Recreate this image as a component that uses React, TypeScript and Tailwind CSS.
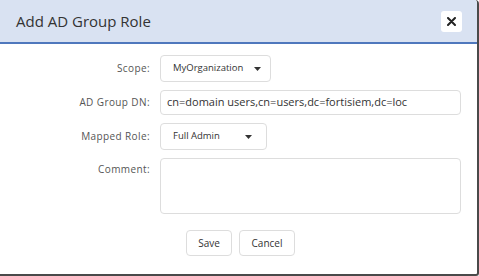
function Caret() {
  return (
    <svg width="7" height="4" viewBox="0 0 7 4" className="ml-auto shrink-0">
      <path d="M0 0h7L3.5 4z" fill="#333" />
    </svg>
  );
}

function Label({ text, top }: { text: string; top?: boolean }) {
  return (
    <div
      className={`w-[150px] shrink-0 text-right text-[10px] tracking-[0.4px] text-[#555] whitespace-nowrap ${
        top ? "self-start pt-[4px]" : ""
      }`}
    >
      {text}
    </div>
  );
}

export default function App() {
  return (
    <div
      className="w-[479px] h-[276px] bg-white border-r-2 border-b-2 border-[#4a4a4a] rounded-tr-[4px] rounded-br-[3px] overflow-hidden flex flex-col"
      style={{ fontFamily: '"Open Sans", "Noto Sans", sans-serif' }}
    >
      <div className="h-[44px] shrink-0 bg-[#d9e2f2] border-b-2 border-[#4f78bd] flex items-center pl-[16px] pr-[15px]">
        <span className="text-[15px] text-[#333]">Add AD Group Role</span>
        <button className="ml-auto w-[21px] h-[21px] bg-white rounded-[3px] flex items-center justify-center">
          <svg width="9" height="9" viewBox="0 0 9 9">
            <path d="M1 1l7 7M8 1L1 8" stroke="#222" strokeWidth="2" strokeLinecap="round" />
          </svg>
        </button>
      </div>

      <div className="flex flex-col pt-[11px] gap-[8px]">
        <div className="flex items-center gap-[10px]">
          <Label text="Scope:" />
          <div className="w-[111px] h-[27px] border border-[#ddd] rounded-[4px] flex items-center pl-[12px] pr-[9px] text-[9.5px] text-[#333] whitespace-nowrap">
            MyOrganization
            <Caret />
          </div>
        </div>

        <div className="flex items-center gap-[10px]">
          <Label text="AD Group DN:" />
          <div className="w-[301px] h-[25px] border border-[#ddd] rounded-[4px] flex items-center px-[6px] text-[11px] text-[#333] whitespace-nowrap">
            cn=domain users,cn=users,dc=fortisiem,dc=loc
          </div>
        </div>

        <div className="flex items-center gap-[10px]">
          <Label text="Mapped Role:" />
          <div className="w-[107px] h-[27px] border border-[#ddd] rounded-[4px] flex items-center pl-[12px] pr-[14px] text-[9.5px] text-[#333] whitespace-nowrap">
            Full Admin
            <Caret />
          </div>
        </div>

        <div className="flex gap-[10px]">
          <Label text="Comment:" top />
          <div className="w-[301px] h-[56px] border border-[#ddd] rounded-[4px]" />
        </div>

        <div className="flex gap-[7px] pl-[186px] pt-[8px]">
          <button className="w-[46px] h-[26px] border border-[#ddd] rounded-[4px] text-[10px] text-[#333]">
            Save
          </button>
          <button className="w-[56px] h-[26px] border border-[#ddd] rounded-[4px] text-[10px] text-[#333]">
            Cancel
          </button>
        </div>
      </div>
    </div>
  );
}
